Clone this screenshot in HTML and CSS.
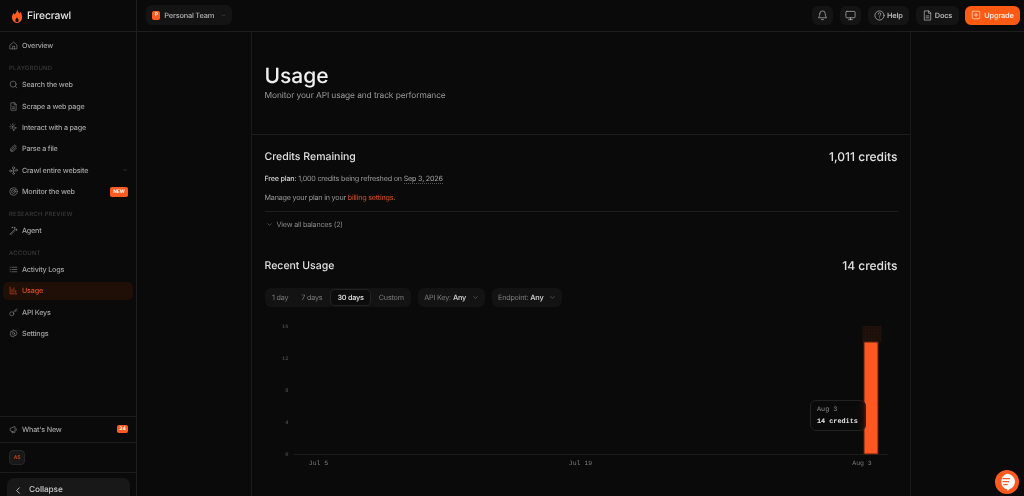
FILE: index.html
```html
<!DOCTYPE html>
<html lang="en">
<head>
    <meta charset="UTF-8">
    <meta name="viewport" content="width=device-width, initial-scale=1.0">
    <title>Usage - Firecrawl</title>
    <link rel="stylesheet" href="styles.css">
</head>
<body>
    <div class="app">
        <aside class="sidebar">
            <div class="brand">
                <svg class="flame" viewBox="0 0 16 22" width="10" height="14"><path fill="#ff5a1f" d="M8.500 0c.5 3.200 2.300 5 3.600 6.800.6-.6 1-1.500 1.100-2.500C15 6.500 16 9.500 16 13c0 5.500-3.500 9-8 9s-8-3.500-8-9c0-3 1.300-5.400 3-7.200.1 1.200.5 2.100 1.200 2.800C6.200 6.400 8 3.600 8.500 0zM8 13c-.7 1.500-2.600 2.800-2.600 5 0 1.500 1.100 2.600 2.600 2.600s2.600-1.100 2.600-2.600c0-2.200-1.900-3.500-2.600-5z"/></svg>
                <span>Firecrawl</span>
            </div>
            <nav class="nav">
                <a class="nav-item"><svg class="ico" viewBox="0 0 24 24"><path d="M3 10.500 12 3l9 7.500V21H3zM9 21v-7h6v7"/></svg>Overview</a>
                <p class="nav-label">PLAYGROUND</p>
                <a class="nav-item"><svg class="ico" viewBox="0 0 24 24"><circle cx="11" cy="11" r="8"/><path d="m21 21-4.300-4.300"/></svg>Search the web</a>
                <a class="nav-item"><svg class="ico" viewBox="0 0 24 24"><path d="M14 2H5v20h14V7zM14 2v5h5M9 13h6M9 17h6"/></svg>Scrape a web page</a>
                <a class="nav-item"><svg class="ico" viewBox="0 0 24 24"><path d="M9 9l11 4-5 2-2 5zM4 4l2 2M10 2v3M2 10h3M5 15l2-2M15 5l-2 2"/></svg>Interact with a page</a>
                <a class="nav-item"><svg class="ico" viewBox="0 0 24 24"><path d="m20 11-8.500 8.500a5 5 0 0 1-7-7L13 4a3.300 3.300 0 0 1 4.700 4.700l-8.500 8.500a1.700 1.700 0 0 1-2.400-2.400l8-8"/></svg>Parse a file</a>
                <a class="nav-item"><svg class="ico" viewBox="0 0 24 24"><circle cx="12" cy="5" r="3"/><circle cx="4" cy="13" r="2.500"/><circle cx="20" cy="11" r="2.500"/><circle cx="12" cy="20" r="2.500"/><path d="M12 8v9.500M6.500 13h11"/></svg>Crawl entire website<svg class="caret" viewBox="0 0 24 24"><path d="m6 9 6 6 6-6"/></svg></a>
                <a class="nav-item"><svg class="ico" viewBox="0 0 24 24"><circle cx="12" cy="12" r="10"/><circle cx="12" cy="12" r="5"/><path d="m12 12 6-6"/></svg>Monitor the web<span class="tag tag-new">NEW</span></a>
                <p class="nav-label">RESEARCH PREVIEW</p>
                <a class="nav-item"><svg class="ico" viewBox="0 0 24 24"><path d="m3 21 12-12 2 2L5 23zM15 3v4M13 5h4M20 8v4M18 10h4M9 3v2M8 4h2"/></svg>Agent</a>
                <p class="nav-label">ACCOUNT</p>
                <a class="nav-item"><svg class="ico" viewBox="0 0 24 24"><path d="M8 6h13M8 12h13M8 18h13M3 6h1M3 12h1M3 18h1"/></svg>Activity Logs</a>
                <a class="nav-item active"><svg class="ico" viewBox="0 0 24 24"><path d="M3 3v18h18M8 17V9M13 17V5M18 17v-5"/></svg>Usage</a>
                <a class="nav-item"><svg class="ico" viewBox="0 0 24 24"><circle cx="7.500" cy="15.500" r="5.500"/><path d="m11.500 11.500 9-9M16 7l3 3M19 4l2 2"/></svg>API Keys</a>
                <a class="nav-item"><svg class="ico" viewBox="0 0 24 24"><circle cx="12" cy="12" r="3"/><path d="M12 2l2.500 3 4-.5.500 4 3 2.500-3 2.500-.5 4-4-.5L12 22l-2.500-3-4 .5-.5-4L2 13l3-2.500-.5-4 4 .5z"/></svg>Settings</a>
            </nav>
            <div class="side-news">
                <a class="nav-item"><svg class="ico" viewBox="0 0 24 24"><path d="M3 10v5l13 5V5zM8 17v4h3v-2.500M19 9a4 4 0 0 1 0 6"/></svg>What's New<span class="tag tag-count">34</span></a>
            </div>
            <div class="side-user"><span class="avatar">AS</span></div>
            <div class="side-collapse">
                <button class="collapse"><svg viewBox="0 0 24 24"><path d="m15 4-8 8 8 8"/></svg>Collapse</button>
            </div>
        </aside>

        <div class="main">
            <header class="topbar">
                <button class="team"><span class="team-badge">P</span>Personal Team<svg class="caret" viewBox="0 0 24 24"><path d="m6 9 6 6 6-6"/></svg></button>
                <div class="top-actions">
                    <button class="top-btn square"><svg class="ico" viewBox="0 0 24 24"><path d="M6 8a6 6 0 0 1 12 0c0 7 3 9 3 9H3s3-2 3-9M10 21h4"/></svg></button>
                    <button class="top-btn square"><svg class="ico" viewBox="0 0 24 24"><rect x="2" y="3" width="20" height="14" rx="2"/><path d="M8 21h8M12 17v4"/></svg></button>
                    <button class="top-btn"><svg class="ico" viewBox="0 0 24 24"><circle cx="12" cy="12" r="10"/><path d="M9 9a3 3 0 0 1 6 0c0 2-3 2.500-3 4.500M12 17h.01"/></svg>Help</button>
                    <button class="top-btn docs"><svg class="ico" viewBox="0 0 24 24"><path d="M14 2H5v20h14V7zM14 2v5h5M9 13h6M9 17h6"/></svg>Docs</button>
                    <button class="upgrade"><svg class="ico" viewBox="0 0 24 24"><rect x="3" y="3" width="18" height="18" rx="2"/><path d="M12 8v8M8 12h8"/></svg>Upgrade</button>
                </div>
            </header>

            <div class="page">
                <main class="column">
                    <section class="intro">
                        <h1>Usage</h1>
                        <p>Monitor your API usage and track performance</p>
                    </section>

                    <section class="credits">
                        <div class="section-head">
                            <h2>Credits Remaining</h2>
                            <strong>1,011 credits</strong>
                        </div>
                        <p class="plan"><b>Free plan:</b> 1,000 credits being refreshed on <span class="date">Sep 3, 2026</span></p>
                        <p class="manage">Manage your plan in your <a>billing settings</a>.</p>
                        <div class="balances"><svg class="caret" viewBox="0 0 24 24"><path d="m6 9 6 6 6-6"/></svg>View all balances (2)</div>
                    </section>

                    <section class="recent">
                        <div class="section-head">
                            <h2>Recent Usage</h2>
                            <strong>14 credits</strong>
                        </div>
                        <div class="filters">
                            <div class="range">
                                <span>1 day</span>
                                <span>7 days</span>
                                <span class="selected">30 days</span>
                                <span>Custom</span>
                            </div>
                            <div class="filter">API Key: <b>Any</b><svg class="caret" viewBox="0 0 24 24"><path d="m6 9 6 6 6-6"/></svg></div>
                            <div class="filter">Endpoint: <b>Any</b><svg class="caret" viewBox="0 0 24 24"><path d="m6 9 6 6 6-6"/></svg></div>
                        </div>
                        <div class="chart">
                            <svg viewBox="0 0 634 150" width="634" height="150">
                                <defs>
                                    <pattern id="hatch" width="3" height="3" patternUnits="userSpaceOnUse">
                                        <rect width="3" height="3" fill="#1d0f09"/>
                                        <rect width="1" height="1" fill="#2a140b"/>
                                    </pattern>
                                </defs>
                                <g class="axis">
                                    <text x="23.500" y="8" text-anchor="end">16</text>
                                    <text x="23.500" y="40" text-anchor="end">12</text>
                                    <text x="23.500" y="72" text-anchor="end">8</text>
                                    <text x="23.500" y="104" text-anchor="end">4</text>
                                    <text x="23.500" y="136" text-anchor="end">0</text>
                                    <text x="53.500" y="144.500" text-anchor="middle" class="x">Jul 5</text>
                                    <text x="315.500" y="144.500" text-anchor="middle" class="x">Jul 19</text>
                                    <text x="597" y="144.500" text-anchor="middle" class="x">Aug 3</text>
                                </g>
                                <line x1="28.500" y1="134.500" x2="622.500" y2="134.500" stroke="#1c1c1c"/>
                                <rect x="597.500" y="6" width="19" height="16" fill="url(#hatch)"/>
                                <rect x="599" y="22" width="14" height="112" fill="#ff5722" stroke="#5a200c"/>
                            </svg>
                            <div class="tooltip">
                                <span>Aug 3</span>
                                <b>14 credits</b>
                            </div>
                        </div>
                    </section>
                </main>
            </div>
        </div>
    </div>

    <button class="chat"><svg viewBox="0 0 24 24" width="18" height="18"><path fill="#fff" d="M12 1a10.500 10.500 0 0 1 3 20.600c-.5 1-1.500 1.900-3 2.400.4-.8.500-1.500.4-2A11 11 0 0 1 12 1z"/><path stroke="#ff5722" stroke-width="1.800" d="M6 7.500h10M6 11.500h9M7 15.500h6"/></svg></button>
</body>
</html>
```

FILE: styles.css
```css
* {
    box-sizing: border-box;
}

html, body {
    margin: 0;
    height: 100%;
    overflow: hidden;
}

body {
    font-family: 'Inter', 'Liberation Sans', sans-serif;
    font-size: 7.200px;
    letter-spacing: -0.200px;
    text-rendering: geometricPrecision;
    background-color: #0a0a0a;
    color: #d4d4d4;
}

button {
    font-family: inherit;
    letter-spacing: inherit;
    text-rendering: inherit;
    border: none;
    cursor: pointer;
}

p, h1, h2 {
    margin: 0;
}

svg {
    flex: none;
}

.app {
    display: flex;
    height: 496px;
    will-change: transform;
}

.ico {
    width: 10px;
    height: 10px;
    fill: none;
    stroke: currentColor;
    stroke-width: 1.600;
    stroke-linecap: round;
    stroke-linejoin: round;
}

.caret {
    width: 7px;
    height: 7px;
    fill: none;
    stroke: #777;
    stroke-width: 2;
    stroke-linecap: round;
    stroke-linejoin: round;
}

/* sidebar */
.sidebar {
    width: 137px;
    flex: none;
    display: flex;
    flex-direction: column;
    border-right: 1px solid #1e1e1e;
}

.brand {
    height: 32px;
    flex: none;
    display: flex;
    align-items: center;
    gap: 5px;
    padding-left: 12px;
    font-size: 10.300px;
    font-weight: 500;
    letter-spacing: -0.150px;
    color: #e8e8e8;
    border-bottom: 1px solid #1e1e1e;
}

.nav {
    flex: 1;
    padding: 4.500px 3px 0;
}

.nav-item {
    height: 18.400px;
    display: flex;
    align-items: center;
    gap: 4px;
    padding: 0 5px;
    margin-bottom: 3px;
    border-radius: 5px;
    color: #a3a3a3;
    font-weight: 500;
}

.nav-item .ico {
    width: 9px;
    height: 9px;
    margin-left: 1px;
    color: #8a8a8a;
}

.nav-item .caret {
    margin-left: auto;
    width: 6px;
    height: 6px;
    stroke: #555;
}

.nav-item.active {
    background-color: #1f0f07;
    color: #e0501c;
}

.nav-item.active .ico {
    color: #e0501c;
}

.nav-label {
    height: 17.600px;
    padding: 7px 0 0 6px;
    font-size: 6px;
    line-height: 8px;
    letter-spacing: 0.200px;
    font-weight: 500;
    color: #3c3c3c;
}

.tag {
    margin-left: auto;
    background-color: #ff5a1f;
    color: #fff;
    border-radius: 2px;
    font-size: 4.800px;
    font-weight: 700;
    letter-spacing: 0;
    line-height: 10px;
    text-align: center;
}

.tag-new {
    width: 18px;
}

.tag-count {
    width: 11px;
    height: 8px;
    line-height: 8px;
}

.side-news {
    height: 27px;
    padding: 3px 3px 0;
    border-top: 1px solid #1c1c1c;
    border-bottom: 1px solid #1c1c1c;
}

.side-user {
    height: 30px;
    display: flex;
    align-items: center;
    padding-left: 9px;
    border-bottom: 1px solid #1c1c1c;
}

.avatar {
    width: 16px;
    height: 15px;
    display: flex;
    align-items: center;
    justify-content: center;
    background-color: #181818;
    border: 1px solid #262626;
    border-radius: 4px;
    color: #c2481b;
    font-size: 5px;
    font-weight: 600;
}

.side-collapse {
    height: 23px;
    padding: 5px 6px 0 7px;
}

.collapse {
    width: 100%;
    height: 24px;
    display: flex;
    align-items: center;
    gap: 6px;
    padding: 0 0 0 7px;
    background-color: #181818;
    border-radius: 7px;
    color: #c8c8c8;
    font-size: 8.300px;
    font-weight: 500;
    letter-spacing: -0.100px;
}

.collapse svg {
    width: 9px;
    height: 9px;
    fill: none;
    stroke: #c8c8c8;
    stroke-width: 2.400;
}

/* top bar */
.main {
    flex: 1;
    display: flex;
    flex-direction: column;
    min-width: 0;
}

.topbar {
    height: 32px;
    flex: none;
    display: flex;
    align-items: center;
    justify-content: space-between;
    padding: 0 4px 1px 9px;
    border-bottom: 1px solid #1e1e1e;
}

.team {
    width: 86px;
    height: 20px;
    display: flex;
    align-items: center;
    gap: 4px;
    padding: 0 6px;
    white-space: nowrap;
    background-color: #141414;
    border-radius: 6px;
    color: #b5b5b5;
    font-size: 7.400px;
    font-weight: 500;
}

.team .caret {
    width: 5px;
    height: 5px;
    margin-left: 3px;
}

.team-badge {
    width: 9px;
    height: 9px;
    display: flex;
    align-items: center;
    justify-content: center;
    background-color: #ff5a1f;
    border-radius: 2px;
    color: #fff;
    font-size: 5px;
    font-weight: 700;
}

.top-actions {
    display: flex;
    gap: 6.500px;
}

.top-btn {
    width: 41.500px;
    height: 19px;
    display: flex;
    align-items: center;
    justify-content: center;
    gap: 2px;
    padding: 0;
    background-color: #141414;
    border-radius: 6px;
    color: #b5b5b5;
    font-size: 7.400px;
    font-weight: 600;
}

.top-btn .ico {
    width: 11px;
    height: 11px;
}

.top-btn.docs {
    width: 43px;
}

.top-btn.square {
    width: 21.500px;
}

.upgrade {
    width: 55px;
    height: 19px;
    display: flex;
    align-items: center;
    justify-content: center;
    gap: 3px;
    padding: 0;
    background-color: #ff5a14;
    border-radius: 6px;
    color: #ffe6da;
    font-size: 7.400px;
    font-weight: 600;
}

/* page */
.page {
    flex: 1;
}

.column {
    width: 660px;
    height: 100%;
    margin-left: 114px;
    border-left: 1px solid #1a1a1a;
    border-right: 1px solid #1a1a1a;
}

.intro {
    height: 103px;
    padding: 32px 12.500px 0;
    border-bottom: 1px solid #1e1e1e;
}

.intro h1 {
    font-size: 21px;
    line-height: 26px;
    font-weight: 500;
    letter-spacing: 0;
    color: #f0f0f0;
}

.intro p {
    font-size: 8.400px;
    line-height: 12px;
    letter-spacing: -0.100px;
    color: #9a9a9a;
}

.section-head {
    display: flex;
    justify-content: space-between;
    align-items: center;
    height: 16px;
    letter-spacing: 0;
}

.section-head h2 {
    font-size: 10.500px;
    font-weight: 500;
    color: #e0e0e0;
}

.section-head strong {
    font-size: 12px;
    font-weight: 500;
    color: #e0e0e0;
}

.credits {
    height: 122px;
    padding: 13px 12.500px 0;
}

.plan {
    margin-top: 9px;
    line-height: 11px;
    color: #9a9a9a;
}

.plan b {
    font-weight: 500;
    color: #d0d0d0;
}

.date {
    border-bottom: 1px dotted #555;
    color: #a8a8a8;
}

.manage {
    margin-top: 8px;
    line-height: 11px;
    color: #9a9a9a;
}

.manage a {
    color: #e0501c;
}

.balances {
    display: flex;
    align-items: center;
    gap: 4px;
    height: 25px;
    margin-top: 8px;
    padding-left: 1px;
    border-top: 1px solid #1e1e1e;
    color: #8a8a8a;
}

.recent {
    padding: 0 12.500px;
}

.filters {
    display: flex;
    gap: 7px;
    margin-top: 15px;
}

.range, .filter {
    height: 19px;
    display: flex;
    align-items: center;
    background-color: #131313;
    border-radius: 6px;
    color: #7c7c7c;
}

.range {
    padding: 0 1px;
}

.range span {
    height: 17px;
    padding: 0 6.500px;
    line-height: 17px;
}

.range .selected {
    margin: 0 1px;
    border: 1px solid #222;
    border-radius: 5px;
    background-color: #0c0c0c;
    line-height: 15px;
    color: #d8d8d8;
    font-weight: 600;
}

.filter {
    gap: 2px;
    padding: 0 6px;
}

.filter b {
    color: #c8c8c8;
    font-weight: 600;
}

.filter .caret {
    margin-left: 4px;
}

.chart {
    position: relative;
    margin-top: 13px;
}

.chart svg {
    display: block;
}

.axis text {
    font-family: 'Liberation Mono', monospace;
    font-size: 5.400px;
    letter-spacing: 0;
    fill: #5e5e5e;
}

.axis .x {
    font-size: 6.500px;
    fill: #7c7c7c;
}

.tooltip {
    position: absolute;
    left: 545.500px;
    top: 80px;
    width: 56px;
    height: 31px;
    padding: 5px 6px;
    display: flex;
    flex-direction: column;
    gap: 3px;
    white-space: nowrap;
    background-color: rgba(10, 10, 10, 0.600);
    backdrop-filter: blur(3px);
    border: 1px solid #222;
    border-radius: 6px;
    font-family: 'Liberation Mono', monospace;
    font-size: 6.800px;
    letter-spacing: 0;
    line-height: 9px;
    color: #8a8a8a;
}

.tooltip b {
    color: #e6e6e6;
}

.chat {
    position: fixed;
    right: 5px;
    bottom: 2px;
    width: 24px;
    height: 24px;
    display: flex;
    align-items: center;
    justify-content: center;
    padding: 0;
    background-color: #ff5a1f;
    border-radius: 50%;
}
```
